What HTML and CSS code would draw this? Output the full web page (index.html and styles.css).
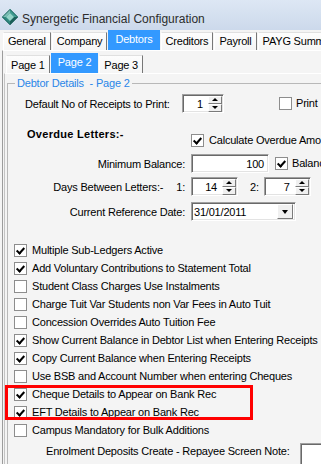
FILE: index.html
```html
<!DOCTYPE html>
<html>
<head>
<meta charset="utf-8">
<title>Synergetic Financial Configuration</title>
<link rel="stylesheet" href="styles.css">
</head>
<body>
<div class="window">
  <div class="titlebar">
    <svg class="appicon" viewBox="0 0 16 16" width="16" height="16">
      <polygon points="8,0 16,8 8,16 0,8" fill="#2a7f78"/>
      <polygon points="8,0 0,8 4,8 8,4" fill="#78bdb3"/>
      <polygon points="8,0 16,8 12,8 8,4" fill="#3f9c91"/>
      <polygon points="0,8 8,16 8,12 4,8" fill="#2f8a80"/>
      <polygon points="16,8 8,16 8,12 12,8" fill="#1b5f59"/>
      <polygon points="8,4 12,8 8,12 4,8" fill="#93d3c7"/>
      <polygon points="8,0.5 15.5,8 8,15.5 0.5,8" fill="none" stroke="#1f5e5a" stroke-width="0.8"/>
    </svg>
    <span class="title">Synergetic Financial Configuration</span>
  </div>

  <div class="tabstrip main-tabs">
    <div class="tab">General</div>
    <div class="tab">Company</div>
    <div class="tab active">Debtors</div>
    <div class="tab">Creditors</div>
    <div class="tab">Payroll</div>
    <div class="tab">PAYG Summary</div>
  </div>

  <div class="page outer">
    <div class="tabstrip sub-tabs">
      <div class="tab">Page 1</div>
      <div class="tab active">Page 2</div>
      <div class="tab">Page 3</div>
    </div>

    <div class="page inner">
      <fieldset class="group">
        <legend>Debtor Details&nbsp; - Page 2</legend>

        <div class="row row-a">
          <span class="lbl-a">Default No of Receipts to Print:</span>
          <div class="field spin w42">
            <span class="val">1</span>
            <span class="spinbtns"><span class="sb up"></span><span class="sb dn"></span></span>
          </div>
          <label class="chk print"><span class="box"></span>Print</label>
        </div>

        <div class="row row-b">
          <span class="lbl-b">Overdue Letters:-</span>
          <label class="chk calc"><span class="box on"></span>Calculate Overdue Amounts</label>
        </div>

        <div class="row row-c">
          <span class="lbl-r">Minimum Balance:</span>
          <div class="field w78"><span class="val">100</span></div>
          <label class="chk bal"><span class="box on"></span>Balance</label>
        </div>

        <div class="row row-d">
          <span class="lbl-r split"><span>Days Between Letters:-</span><span>1:</span></span>
          <div class="field spin w47">
            <span class="val">14</span>
            <span class="spinbtns"><span class="sb up"></span><span class="sb dn"></span></span>
          </div>
          <span class="lbl-2">2:</span>
          <div class="field spin w47">
            <span class="val">7</span>
            <span class="spinbtns"><span class="sb up"></span><span class="sb dn"></span></span>
          </div>
        </div>

        <div class="row row-e">
          <span class="lbl-r">Current Reference Date:</span>
          <div class="field combo">
            <span class="val left">31/01/2011</span>
            <span class="ddbtn"></span>
          </div>
        </div>

        <div class="checklist">
          <label class="chk item"><span class="box on"></span>Multiple Sub-Ledgers Active</label>
          <label class="chk item"><span class="box on"></span>Add Voluntary Contributions to Statement Total</label>
          <label class="chk item"><span class="box"></span>Student Class Charges Use Instalments</label>
          <label class="chk item"><span class="box"></span>Charge Tuit Var Students non Var Fees in Auto Tuit</label>
          <label class="chk item"><span class="box"></span>Concession Overrides Auto Tuition Fee</label>
          <label class="chk item"><span class="box on"></span>Show Current Balance in Debtor List when Entering Receipts</label>
          <label class="chk item"><span class="box on"></span>Copy Current Balance when Entering Receipts</label>
          <label class="chk item"><span class="box"></span>Use BSB and Account Number when entering Cheques</label>
          <label class="chk item"><span class="box on"></span>Cheque Details to Appear on Bank Rec</label>
          <label class="chk item"><span class="box on"></span>EFT Details to Appear on Bank Rec</label>
          <label class="chk item"><span class="box"></span>Campus Mandatory for Bulk Additions</label>
        </div>

        <div class="row row-last">
          <span class="lbl-last">Enrolment Deposits Create - Repayee Screen Note:</span>
          <div class="field note"></div>
        </div>
      </fieldset>
    </div>
  </div>

  <div class="annot"></div>
</div>
</body>
</html>
```

FILE: styles.css
```css
* { box-sizing: border-box; }

html, body {
  margin: 0;
  padding: 0;
}

body {
  width: 321px;
  height: 464px;
  overflow: hidden;
  background: #f4f4f4;
  font-family: "Liberation Sans", Arial, sans-serif;
  font-size: 11px;
  letter-spacing: -0.2px;
  color: #000;
}

.window {
  position: relative;
  width: 321px;
  height: 464px;
  overflow: hidden;
}

/* ---------- title bar ---------- */
.titlebar {
  height: 30px;
  display: flex;
  align-items: flex-start;
  padding: 9px 0 0 2px;
  background: linear-gradient(#dde7f4, #ccd9eb);
}

.appicon {
  flex: none;
  display: block;
}

.title {
  margin: 3px 0 0 4px;
  font-size: 12px;
  line-height: 14px;
  letter-spacing: 0;
  color: #2c2c2c;
  white-space: nowrap;
}

/* ---------- tabs ---------- */
.tabstrip {
  display: flex;
  align-items: flex-end;
  white-space: nowrap;
}

.main-tabs {
  height: 20px;
  padding-left: 3px;
}

.sub-tabs {
  height: 22px;
  padding-left: 2px;
}

.tab {
  flex: none;
  height: 18px;
  line-height: 17px;
  padding: 0 4px;
  margin-right: 1px;
  background: linear-gradient(#fdfdfd, #f5f5f5);
  border-top: 1px solid #e0e0e0;
  border-left: 1px solid #ffffff;
  border-right: 1px solid #777777;
}

.sub-tabs .tab {
  line-height: 18px;
}

.tab.active {
  height: 20px;
  line-height: 16px;
  padding: 0 6px;
  background: #3399ff;
  color: #fff;
  border-color: #3399ff;
}

/* ---------- pages ---------- */
.page.outer {
  margin-left: 2px;
  padding-left: 1px;
  border-top: 1px solid #ffffff;
  border-left: 1px solid #9c9c9c;
  width: 400px;
  height: 420px;
}

.page.inner {
  border-top: 1px solid #ffffff;
  border-left: 1px solid #c4c4c4;
  height: 400px;
}

/* ---------- group box ---------- */
.group {
  margin: 3px 0 0 2px;
  padding: 0 0 0 6px;
  border: 1px solid #b8b8b8;
  min-width: 0;
  width: 390px;
  height: 420px;
}

.group legend {
  margin-left: 1px;
  padding: 0 2px;
  line-height: 13px;
  color: #2a86e8;
  white-space: nowrap;
}

/* ---------- rows ---------- */
.row {
  display: flex;
  white-space: nowrap;
  height: 19px;
}

.row-a { margin-top: 4px; align-items: center; }
.row-b { margin-top: 15px; align-items: flex-start; }
.row-c { margin-top: 7px; align-items: center; }
.row-d { margin-top: 4px; align-items: center; }
.row-e { margin-top: 6px; align-items: center; }

.lbl-a {
  width: 168px;
  padding-left: 11px;
  flex: none;
}

.lbl-b {
  width: 177px;
  padding-left: 13px;
  flex: none;
  font-weight: bold;
  letter-spacing: 0.3px;
  line-height: 13px;
}

.lbl-r {
  width: 171px;
  margin-right: 6px;
  text-align: right;
  flex: none;
}

.lbl-r.split {
  display: flex;
  justify-content: flex-end;
  gap: 13px;
}

.lbl-2 {
  margin: 0 5px 0 12px;
}

/* ---------- sunken fields ---------- */
.field {
  flex: none;
  display: flex;
  align-items: center;
  height: 19px;
  background: #fff;
  border: 1px solid;
  border-color: #a0a0a0 #ffffff #ffffff #a0a0a0;
  box-shadow: inset 1px 1px 0 #696969, inset -1px -1px 0 #e3e3e3;
}

.field .val {
  flex: 1;
  text-align: right;
  padding-right: 4px;
}

.field .val.left {
  text-align: left;
  padding: 0 0 0 2px;
}

.w42 { width: 42px; }
.w47 { width: 47px; }
.w78 { width: 78px; }

.spin .val { padding-right: 5px; }

.spinbtns {
  flex: none;
  display: flex;
  flex-direction: column;
  width: 14px;
  height: 16px;
  margin-right: 1px;
}

.sb {
  flex: 1;
  display: flex;
  align-items: center;
  justify-content: center;
  background: #f0f0f0;
  border: 1px solid;
  border-color: #ffffff #7a7a7a #7a7a7a #ffffff;
}

.sb.up::after {
  content: "";
  border-left: 3px solid transparent;
  border-right: 3px solid transparent;
  border-bottom: 3px solid #000;
}

.sb.dn::after {
  content: "";
  border-left: 3px solid transparent;
  border-right: 3px solid transparent;
  border-top: 3px solid #000;
}

.combo {
  width: 105px;
}

.ddbtn {
  flex: none;
  width: 16px;
  height: 15px;
  margin-right: 2px;
  display: flex;
  align-items: center;
  justify-content: center;
  background: #f0f0f0;
  border: 1px solid;
  border-color: #ffffff #7a7a7a #7a7a7a #ffffff;
}

.ddbtn::after {
  content: "";
  border-left: 3.5px solid transparent;
  border-right: 3.5px solid transparent;
  border-top: 4px solid #000;
}

.note {
  width: 60px;
  height: 23px;
}

/* ---------- checkboxes ---------- */
.chk {
  display: flex;
  align-items: center;
  white-space: nowrap;
  line-height: 13px;
}

.box {
  flex: none;
  width: 13px;
  height: 13px;
  margin-right: 5px;
  background: #fff;
  border: 1px solid #8d8d8d;
  display: flex;
  align-items: center;
  justify-content: center;
}

.box.on::after {
  content: "";
  width: 3px;
  height: 6px;
  margin-top: -2px;
  border: solid #000;
  border-width: 0 2px 2px 0;
  transform: rotate(42deg);
}

.print { margin-left: 55px; }
.calc { align-self: flex-end; }
.bal { margin-left: 6px; }
.bal .box { margin-right: 4px; }
.print .box { margin-right: 4px; }

.checklist {
  margin-top: 20px;
}

.chk.item {
  height: 18px;
  line-height: 18px;
  align-items: flex-start;
}

.chk.item .box {
  margin-top: 3px;
}

.row-last {
  margin-top: 4px;
  height: 23px;
  align-items: flex-start;
}

.lbl-last {
  width: 286px;
  padding-left: 32px;
  line-height: 17px;
  flex: none;
}

/* ---------- annotation overlay ---------- */
.annot {
  position: absolute;
  left: 5px;
  top: 385px;
  width: 248px;
  height: 35px;
  border: 3px solid #ff0000;
}
```
